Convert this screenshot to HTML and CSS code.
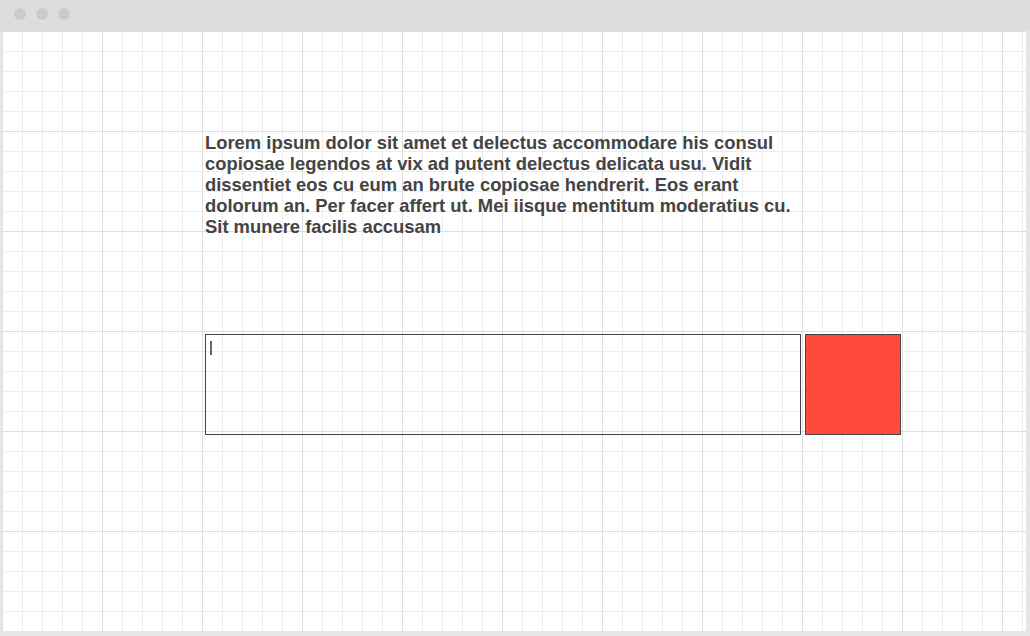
FILE: index.html
```html
<!DOCTYPE html>
<html>
<head>
<meta charset="utf-8">
<link rel="stylesheet" href="styles.css">
</head>
<body>
<div class="window">
  <div class="titlebar">
    <span class="dot"></span><span class="dot"></span><span class="dot"></span>
  </div>
  <div class="canvas">
    <p class="copy">Lorem ipsum dolor sit amet et delectus accommodare his consul copiosae legendos at vix ad putent delectus delicata usu. Vidit dissentiet eos cu eum an brute copiosae hendrerit. Eos erant dolorum an. Per facer affert ut. Mei iisque mentitum moderatius cu. Sit munere facilis accusam</p>
    <div class="row">
      <div class="field"><span class="caret"></span></div>
      <div class="button"></div>
    </div>
  </div>
</div>
</body>
</html>
```
FILE: styles.css
```css
html, body {
  margin: 0;
  padding: 0;
  background: #ffffff;
}
.window {
  width: 1030px;
  height: 636px;
  background: #e6e6e6;
  box-sizing: border-box;
  overflow: hidden;
}
.titlebar {
  height: 31px;
  background: #dddddd;
  display: flex;
  align-items: center;
  gap: 10px;
  padding-left: 14px;
  padding-bottom: 3px;
  box-sizing: border-box;
}
.dot {
  width: 12px;
  height: 12px;
  border-radius: 50%;
  background: #cbcbcb;
}
.canvas {
  margin-left: 2px;
  width: 1024px;
  height: 600px;
  background-color: #ffffff;
  background-image:
    linear-gradient(to right, #dedede 1px, transparent 1px),
    linear-gradient(to bottom, #dedede 1px, transparent 1px),
    linear-gradient(to right, #ededed 1px, transparent 1px),
    linear-gradient(to bottom, #ededed 1px, transparent 1px);
  background-size: 100px 100px, 100px 100px, 20px 20px, 20px 20px;
  background-position: 0 0;
  padding: 101px 0 0 203px;
  box-sizing: border-box;
}
.copy {
  margin: 0;
  width: 598px;
  height: 202px;
  font-family: "Liberation Sans", Arial, sans-serif;
  font-weight: bold;
  font-size: 18.4px;
  line-height: 21px;
  color: #444444;
}
.row {
  display: flex;
  gap: 4px;
}
.field {
  width: 596px;
  height: 101px;
  border: 1px solid #444444;
  box-sizing: border-box;
  padding: 6px 0 0 4px;
}
.caret {
  display: block;
  width: 2px;
  height: 14px;
  background: #666666;
}
.button {
  width: 96px;
  height: 101px;
  background: #ff4a3b;
  border: 1px solid #444444;
  box-sizing: border-box;
}
```
